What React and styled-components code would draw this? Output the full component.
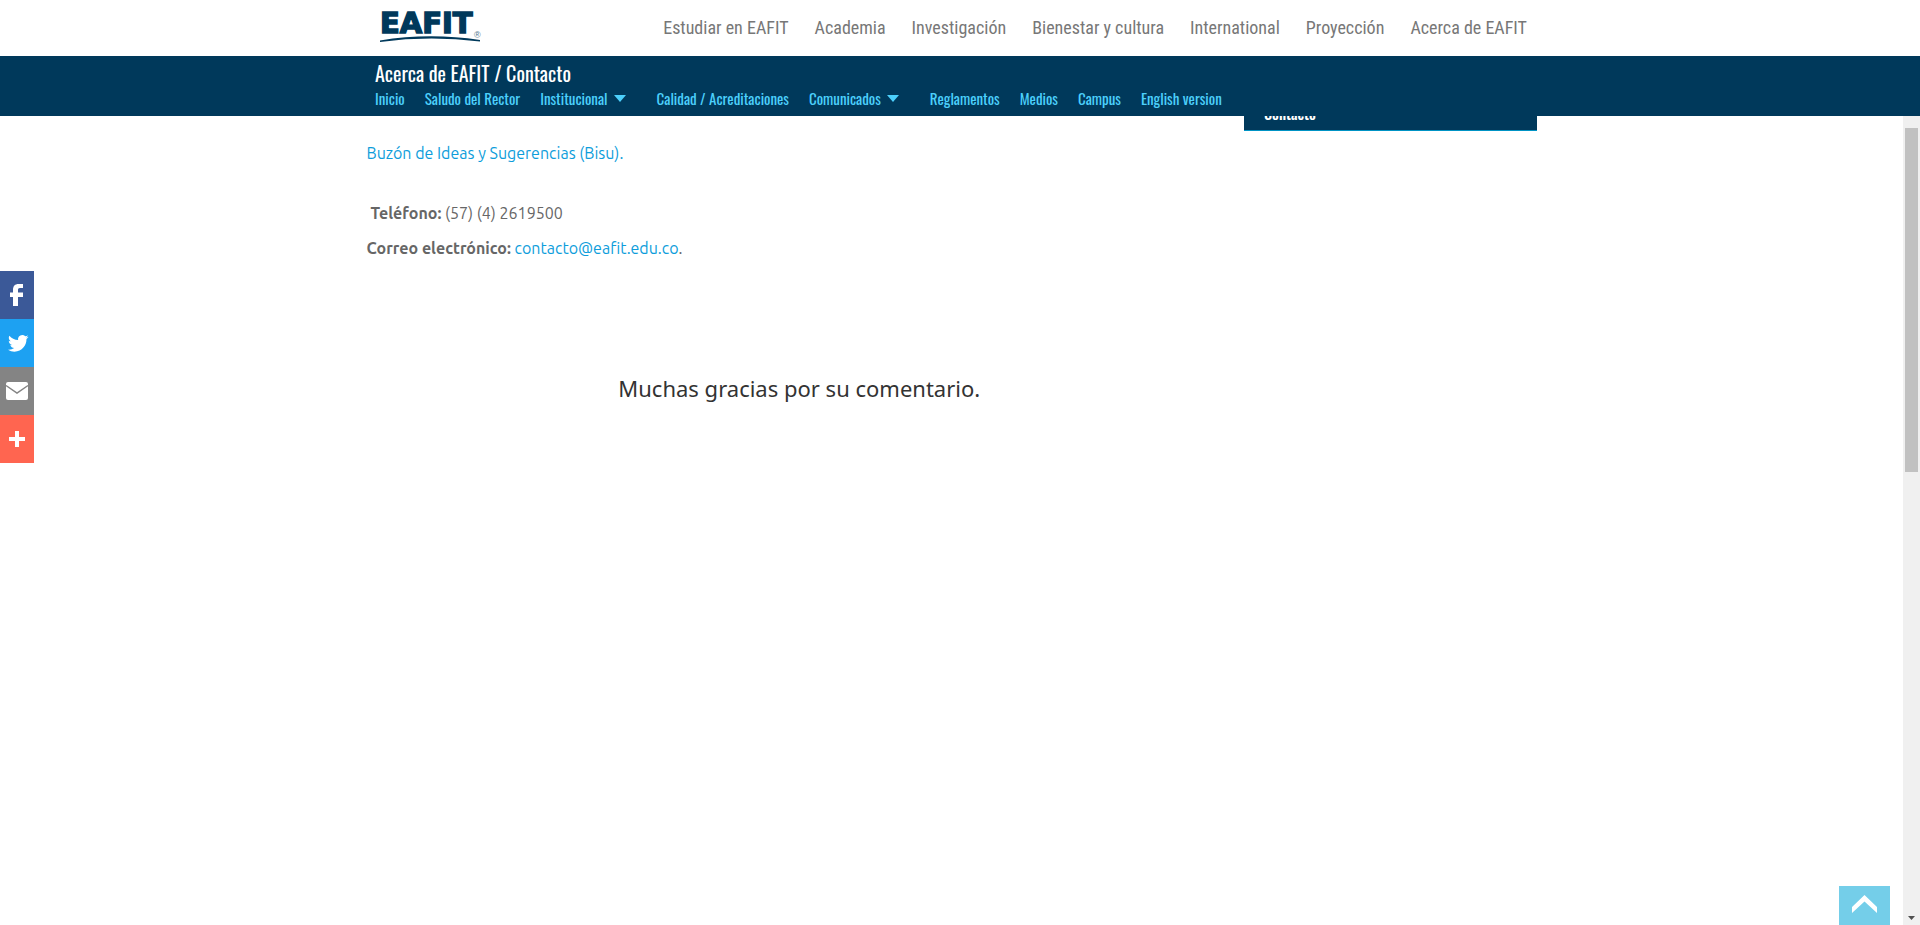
import React from 'react';
import styled, { createGlobalStyle } from 'styled-components';

const narrow = '"Roboto Condensed", "Liberation Sans Narrow", "Liberation Sans", sans-serif';
const tall = '"Oswald", "Liberation Sans Narrow", "Liberation Sans", sans-serif';
const body = '"Ubuntu", "Noto Sans", sans-serif';
const navy = '#00395b';

const GlobalStyle = createGlobalStyle`
  * { box-sizing: border-box; }
  body { margin: 0; background: #fff; font-family: ${body}; color: #666; }
  a { text-decoration: none; }
`;

const Page = styled.div`
  display: flex;
  flex-direction: column;
  min-height: 100vh;
`;

const Container = styled.div`
  width: 100%;
  max-width: 1170px;
  margin: 0 auto;
`;

const TopBar = styled(Container)`
  display: flex;
  align-items: center;
  justify-content: space-between;
  height: 56px;
  padding: 0 18px 0 4px;
`;

const LogoLink = styled.a`
  display: block;
  height: 48px;
  svg { display: block; }
`;

const MainNav = styled.nav`
  display: flex;
  gap: 26px;
`;

const MainLink = styled.a`
  font: 18px/24px ${narrow};
  color: #777;
  white-space: nowrap;
`;

const SubBar = styled.div`
  background: ${navy};
  height: 60px;
`;

const SectionTitle = styled.h1`
  margin: 0;
  padding-top: 5px;
  font: 400 20px/24px ${tall};
  color: #fff;
`;

const SubNav = styled.nav`
  display: flex;
  gap: 20px;
  margin-top: 2px;
`;

const SubLink = styled.a`
  display: flex;
  align-items: center;
  gap: 6px;
  padding-right: ${({ $menu }) => ($menu ? 11 : 0)}px;
  font: 15px/22px ${tall};
  color: #4cd0fc;
  white-space: nowrap;
`;

const Viewport = styled.div`
  flex: 1;
  display: flex;
`;

const Content = styled.main`
  flex: 1;
`;

const Columns = styled(Container)`
  display: grid;
  grid-template-columns: 3fr 1fr;
`;

const Article = styled.div`
  padding-top: 25px;
  font-size: 16px;
  line-height: 24px;
  a { color: #0d9ddb; }
  p { margin: 0; }
`;

const Phone = styled.p`
  && { margin: 36px 0 11px; padding-left: 4px; }
`;

const Thanks = styled.p`
  && {
    margin-top: 112px;
    padding-right: 12px;
    text-align: center;
    font: 22px/32px "Noto Sans", sans-serif;
    color: #333;
  }
`;

const SideMenu = styled.aside`
  display: flex;
  flex-direction: column;
  justify-content: flex-end;
  height: 15px;
  overflow: hidden;
  padding: 0 20px 8px;
  background: ${navy};
  border-bottom: 1px solid #0093c4;
  a { font: 500 15px/18px ${tall}; color: #fff; }
`;

const ScrollTrack = styled.div`
  display: flex;
  flex-direction: column;
  align-items: center;
  justify-content: space-between;
  width: 17px;
  padding: 12px 0 5px;
  background: #f0f0f0;
`;

const ScrollThumb = styled.div`
  width: 13px;
  height: 344px;
  background: #c1c1c1;
`;

const ShareBar = styled.div`
  position: fixed;
  left: 0;
  top: 271px;
  display: flex;
  flex-direction: column;
`;

const ShareButton = styled.button`
  display: flex;
  align-items: center;
  justify-content: center;
  width: 34px;
  height: 48px;
  padding: 0;
  border: 0;
  background: ${({ $color }) => $color};
  svg { display: block; }
`;

const BackToTop = styled.button`
  position: fixed;
  right: 30px;
  bottom: 0;
  width: 51px;
  height: 39px;
  padding: 0;
  border: 0;
  background: #74cee9;
  svg { display: block; margin: 0 auto; }
`;

const mainItems = ['Estudiar en EAFIT', 'Academia', 'Investigación', 'Bienestar y cultura', 'International', 'Proyección', 'Acerca de EAFIT'];

const subItems = [
  { text: 'Inicio' },
  { text: 'Saludo del Rector' },
  { text: 'Institucional', menu: true },
  { text: 'Calidad / Acreditaciones' },
  { text: 'Comunicados', menu: true },
  { text: 'Reglamentos' },
  { text: 'Medios' },
  { text: 'Campus' },
  { text: 'English version' },
];

const Logo = () => (
  <svg width="106" height="48" viewBox="0 0 106 48" role="img" aria-label="EAFIT">
    <text x="1" y="29" fontFamily="DejaVu Sans, sans-serif" fontWeight="700" fontSize="29" fill={navy} stroke={navy} strokeWidth="1.5">EAFIT</text>
    <path d="M1 36.500Q50 28.500 101 36v1.500Q50 31.500 1 38z" fill={navy} />
    <text x="95" y="34" fontFamily="Liberation Sans, sans-serif" fontSize="9" fill="#55788e">®</text>
  </svg>
);

const Caret = () => (
  <svg width="12" height="7" viewBox="0 0 12 7" aria-hidden="true">
    <path d="M0 0h12L6 7z" fill="#4cd0fc" />
  </svg>
);

const FacebookIcon = () => (
  <svg width="34" height="48" viewBox="0 0 34 48"><path fill="#fff" d="M13 35V26h-3v-4.500h3V19c0-4 2-6 5.500-6H23v4h-3c-1.500 0-2 .7-2 2v2.500h5V26h-5v9z" /></svg>
);

const TwitterIcon = () => (
  <svg width="34" height="48" viewBox="0 0 34 48"><path fill="#fff" transform="translate(4.500 10.500) scale(.86)" d="M28 8.557a9.900 9.900 0 0 1-2.828.775 4.930 4.930 0 0 0 2.166-2.725 9.700 9.700 0 0 1-3.130 1.194 4.920 4.920 0 0 0-3.593-1.550 4.924 4.924 0 0 0-4.794 6.049c-4.090-.21-7.720-2.170-10.150-5.150a4.940 4.940 0 0 0-.665 2.477c0 1.710.870 3.214 2.190 4.100a5 5 0 0 1-2.230-.616v.060c0 2.390 1.700 4.380 3.952 4.830-.414.115-.850.174-1.297.174q-.476-.001-.928-.090a4.935 4.935 0 0 0 4.600 3.420 9.900 9.900 0 0 1-6.115 2.107q-.600 0-1.175-.068a13.950 13.950 0 0 0 7.548 2.212c9.057 0 14.010-7.502 14.010-14.010 0-.213-.005-.426-.015-.637.960-.695 1.795-1.560 2.455-2.550z" /></svg>
);

const MailIcon = () => (
  <svg width="34" height="48" viewBox="0 0 34 48">
    <rect x="6" y="15" width="22" height="18" rx="2" fill="#fff" />
    <path d="M6 18.500l11 7.500 11-7.500" fill="none" stroke="#848484" strokeWidth="1.500" />
  </svg>
);

const PlusIcon = () => (
  <svg width="34" height="48" viewBox="0 0 34 48"><path fill="#fff" d="M15 16h4v6h6v4h-6v6h-4v-6H9v-4h6z" /></svg>
);

const shares = [
  { label: 'Facebook', color: '#3b5998', Icon: FacebookIcon },
  { label: 'Twitter', color: '#1da1f2', Icon: TwitterIcon },
  { label: 'Email', color: '#848484', Icon: MailIcon },
  { label: 'Compartir', color: '#ff6550', Icon: PlusIcon },
];

export default function App() {
  return (
    <Page>
      <GlobalStyle />
      <header>
        <TopBar>
          <LogoLink href="#"><Logo /></LogoLink>
          <MainNav>
            {mainItems.map((text) => <MainLink href="#" key={text}>{text}</MainLink>)}
          </MainNav>
        </TopBar>
        <SubBar>
          <Container>
            <SectionTitle>Acerca de EAFIT / Contacto</SectionTitle>
            <SubNav>
              {subItems.map(({ text, menu }) => (
                <SubLink href="#" key={text} $menu={menu}>{text}{menu && <Caret />}</SubLink>
              ))}
            </SubNav>
          </Container>
        </SubBar>
      </header>
      <Viewport>
        <Content>
          <Columns>
            <Article>
              <p><a href="#">Buzón de Ideas y Sugerencias (Bisu).</a></p>
              <Phone><strong>Teléfono:</strong> (57) (4) 2619500</Phone>
              <p><strong>Correo electrónico:</strong> <a href="mailto:contacto@eafit.edu.co">contacto@eafit.edu.co</a>.</p>
              <Thanks>Muchas gracias por su comentario.</Thanks>
            </Article>
            <SideMenu><a href="#">Contacto</a></SideMenu>
          </Columns>
        </Content>
        <ScrollTrack aria-hidden="true">
          <ScrollThumb />
          <svg width="7" height="4" viewBox="0 0 7 4"><path d="M0 0h7L3.500 4z" fill="#505050" /></svg>
        </ScrollTrack>
      </Viewport>
      <ShareBar>
        {shares.map(({ label, color, Icon }) => (
          <ShareButton type="button" key={label} aria-label={label} $color={color}><Icon /></ShareButton>
        ))}
      </ShareBar>
      <BackToTop type="button" aria-label="Subir">
        <svg width="51" height="39" viewBox="0 0 51 39"><path d="M13 21L25.500 9 38 21v6L25.500 15.500 13 27z" fill="#fff" /></svg>
      </BackToTop>
    </Page>
  );
}
